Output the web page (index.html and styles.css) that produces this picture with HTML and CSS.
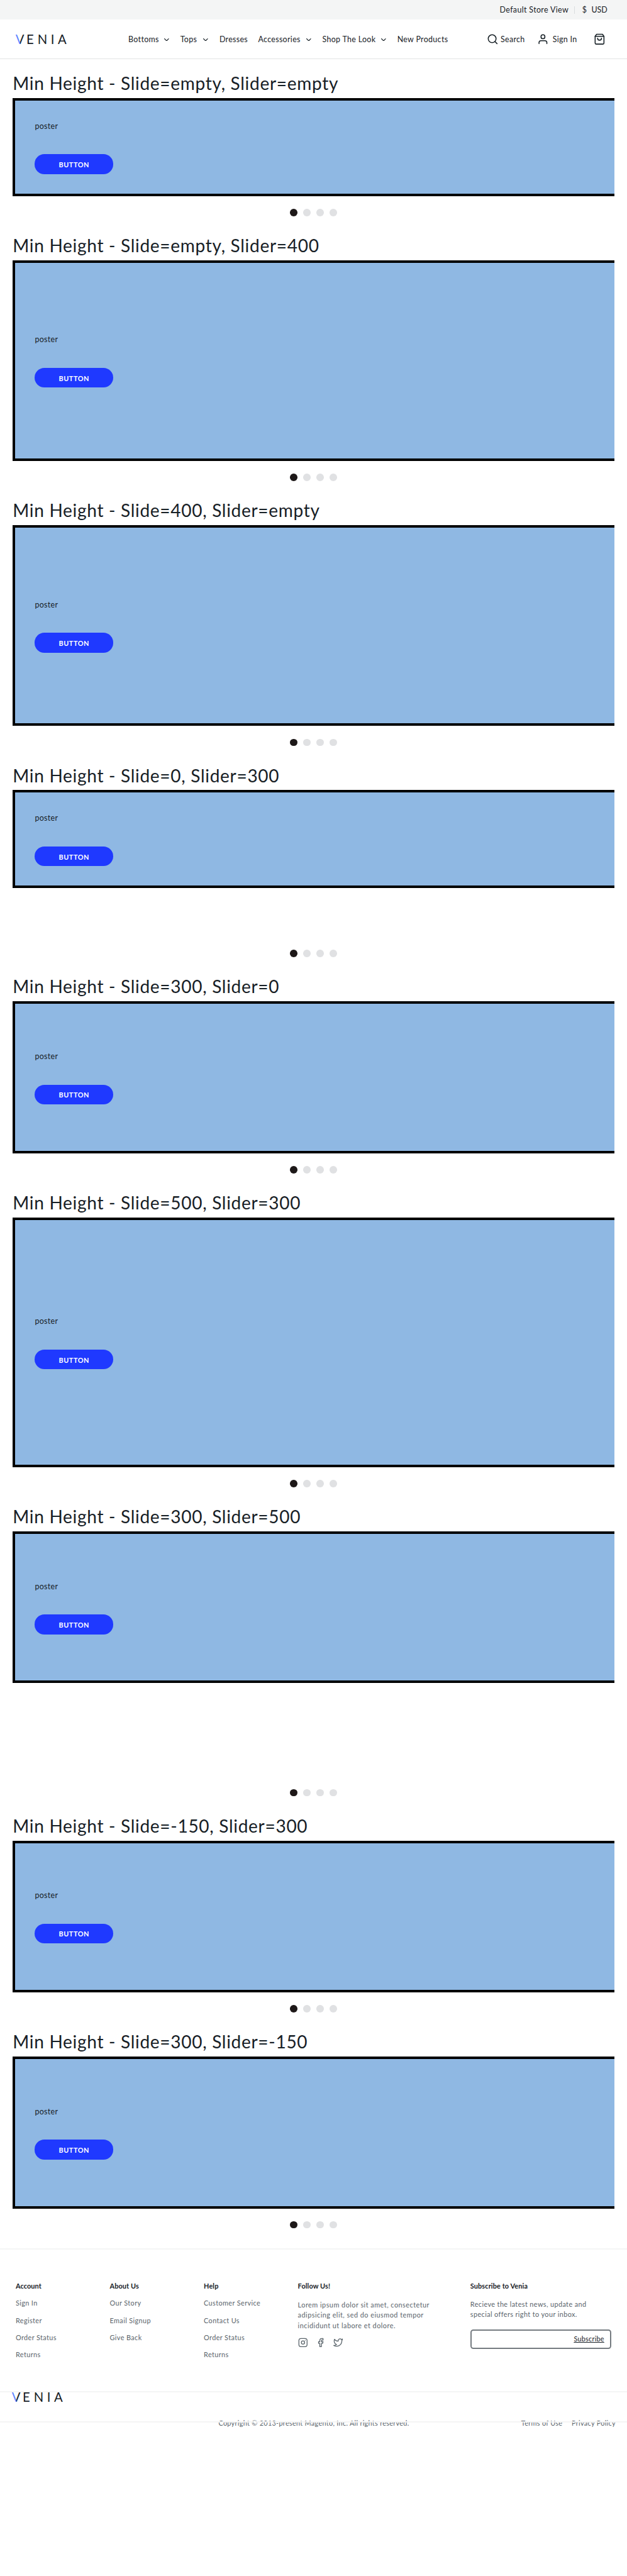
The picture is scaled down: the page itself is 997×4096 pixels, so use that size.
FILE: index.html
```html
<!DOCTYPE html>
<html lang="en">
<head>
<meta charset="utf-8">
<title>Venia</title>
<link rel="stylesheet" href="styles.css">
</head>
<body>
<svg class="defs" aria-hidden="true">
  <defs>
    <linearGradient id="vee" x1="0" x2="1" y1="0" y2="0">
      <stop offset=".5" stop-color="#5b82ff"/><stop offset=".5" stop-color="#172026"/>
    </linearGradient>
    <symbol id="logo" viewBox="0 0 103 19" overflow="visible">
      <text class="logo-text logo-v" x="-.5" y="18.8">V</text>
      <text class="logo-text" y="18.8"><tspan x="21.700">E</tspan><tspan x="44.5">N</tspan><tspan x="71.5">I</tspan><tspan x="86">A</tspan></text>
    </symbol>
    <symbol id="chev" viewBox="0 0 10 6"><path d="M.8.8 5 5 9.2.8"/></symbol>
  </defs>
</svg>
<div class="topbar">
  <span class="store">Default Store View</span><span class="rule"></span><span class="cur">$</span><span class="usd">USD</span>
</div>
<header class="header">
  <svg class="logo"><use href="#logo"/></svg>
  <nav class="nav">
    <a class="n1">Bottoms<svg class="chev"><use href="#chev"/></svg></a>
    <a class="n2">Tops<svg class="chev"><use href="#chev"/></svg></a>
    <a class="n3">Dresses</a>
    <a class="n4">Accessories<svg class="chev"><use href="#chev"/></svg></a>
    <a class="n5">Shop The Look<svg class="chev"><use href="#chev"/></svg></a>
    <a class="n6">New Products</a>
  </nav>
  <div class="actions">
    <svg class="icon" viewBox="0 0 24 24"><circle cx="11" cy="11" r="8"/><path d="m21 21-4.35-4.35"/></svg>
    <span class="search">Search</span>
    <svg class="icon user" viewBox="0 0 24 24"><path d="M20 21v-2a4 4 0 0 0-4-4H8a4 4 0 0 0-4 4v2"/><circle cx="12" cy="7" r="4"/></svg>
    <span class="sign">Sign In</span>
    <svg class="icon" viewBox="0 0 24 24"><path d="M6 2 3 6v14a2 2 0 0 0 2 2h14a2 2 0 0 0 2-2V6l-3-4z"/><path d="M3 6h18M16 10a4 4 0 0 1-8 0"/></svg>
  </div>
</header>
<main class="main">
  <h2>Min Height - Slide=empty, Slider=empty</h2>
  <div class="slider"><div class="slide"><p>poster</p><button>BUTTON</button></div></div>
  <div class="dots"><i class="on"></i><i></i><i></i><i></i></div>

  <h2>Min Height - Slide=empty, Slider=400</h2>
  <div class="slider"><div class="slide h400"><p>poster</p><button>BUTTON</button></div></div>
  <div class="dots"><i class="on"></i><i></i><i></i><i></i></div>

  <h2>Min Height - Slide=400, Slider=empty</h2>
  <div class="slider"><div class="slide h400"><p>poster</p><button>BUTTON</button></div></div>
  <div class="dots"><i class="on"></i><i></i><i></i><i></i></div>

  <h2>Min Height - Slide=0, Slider=300</h2>
  <div class="slider min300"><div class="slide"><p>poster</p><button>BUTTON</button></div></div>
  <div class="dots"><i class="on"></i><i></i><i></i><i></i></div>

  <h2>Min Height - Slide=300, Slider=0</h2>
  <div class="slider"><div class="slide h300"><p>poster</p><button>BUTTON</button></div></div>
  <div class="dots"><i class="on"></i><i></i><i></i><i></i></div>

  <h2>Min Height - Slide=500, Slider=300</h2>
  <div class="slider"><div class="slide h500"><p>poster</p><button>BUTTON</button></div></div>
  <div class="dots"><i class="on"></i><i></i><i></i><i></i></div>

  <h2>Min Height - Slide=300, Slider=500</h2>
  <div class="slider min500"><div class="slide h300"><p>poster</p><button>BUTTON</button></div></div>
  <div class="dots"><i class="on"></i><i></i><i></i><i></i></div>

  <h2>Min Height - Slide=-150, Slider=300</h2>
  <div class="slider"><div class="slide h300"><p>poster</p><button>BUTTON</button></div></div>
  <div class="dots"><i class="on"></i><i></i><i></i><i></i></div>

  <h2>Min Height - Slide=300, Slider=-150</h2>
  <div class="slider"><div class="slide h300"><p>poster</p><button>BUTTON</button></div></div>
  <div class="dots last"><i class="on"></i><i></i><i></i><i></i></div>
</main>
<footer class="footer">
  <div class="links">
    <ul><li><b>Account</b></li><li>Sign In</li><li>Register</li><li>Order Status</li><li>Returns</li></ul>
    <ul><li><b>About Us</b></li><li>Our Story</li><li>Email Signup</li><li>Give Back</li></ul>
    <ul><li><b>Help</b></li><li>Customer Service</li><li>Contact Us</li><li>Order Status</li><li>Returns</li></ul>
    <div class="follow">
      <b>Follow Us!</b>
      <p>Lorem ipsum dolor sit amet, consectetur<br>adipsicing elit, sed do eiusmod tempor<br>incididunt ut labore et dolore.</p>
      <div class="social">
        <svg viewBox="0 0 24 24"><rect x="2" y="2" width="20" height="20" rx="5"/><circle cx="12" cy="12" r="4"/><path d="M17.5 6.5h.01"/></svg>
        <svg viewBox="0 0 24 24"><path d="M18 2h-3a5 5 0 0 0-5 5v3H7v4h3v8h4v-8h3l1-4h-4V7a1 1 0 0 1 1-1h3z"/></svg>
        <svg viewBox="0 0 24 24"><path d="M23 3a10.900 10.900 0 0 1-3.140 1.530 4.480 4.480 0 0 0-7.860 3v1A10.660 10.660 0 0 1 3 4s-4 9 5 13a11.640 11.640 0 0 1-7 2c9 5 20 0 20-11.500a4.500 4.500 0 0 0-.08-.83A7.720 7.720 0 0 0 23 3z"/></svg>
      </div>
    </div>
    <div class="subscribe">
      <b>Subscribe to Venia</b>
      <p>Recieve the latest news, update and<br>special offers right to your inbox.</p>
      <div class="field"><span>Subscribe</span></div>
    </div>
  </div>
  <div class="brand"><svg class="logo"><use href="#logo"/></svg></div>
  <div class="legal">
    <span class="copy">Copyright © 2013-present Magento, Inc. All rights reserved.</span>
    <span class="terms">Terms of Use</span>
    <span class="privacy">Privacy Policy</span>
  </div>
</footer>
</body>
</html>
```
FILE: styles.css
```css
/* 1rem = 10 design units */
* { box-sizing: border-box; margin: 0; padding: 0; }
html { background: #fff; font-size: 7.79px; }
body {
  height: 4096px;
  font: 400 1.6rem/2.4rem Lato, "Open Sans", sans-serif;
  color: #172026;
}
.defs { position: absolute; width: 0; height: 0; }
svg { fill: none; stroke: #172026; stroke-width: 2; stroke-linecap: round; stroke-linejoin: round; flex: none; display: block; }
span, a { white-space: nowrap; }

.topbar { height: 4rem; background: #f4f5f5; display: flex; align-items: center; padding: .1rem 0 0 102rem; }
.store { width: 15.2rem; letter-spacing: .045rem; }
.rule { width: 1px; height: 1.6rem; background: #d9dcde; margin-right: 1.5rem; }
.cur { width: 1.9rem; }

.header { height: 8.1rem; border-bottom: 1px solid #e2e4e5; display: flex; align-items: center; padding-left: 3.2rem; }
.logo { width: 10.3rem; height: 1.9rem; overflow: visible; }
.logo-text { font: 400 26px Lato, sans-serif; fill: #172026; stroke: none; }
.logo-v { fill: url(#vee); }
.nav { display: flex; gap: 2.3rem; width: 73.2rem; margin-left: 12.7rem; padding-top: .2rem; letter-spacing: .04rem; }
.nav a { display: flex; align-items: center; justify-content: space-between; }
.chev { width: 1rem; height: .6rem; stroke-width: 1.6; }
.n1 { width: 8.3rem; } .n2 { width: 5.7rem; } .n3 { width: 5.6rem; } .n4 { width: 10.8rem; } .n5 { width: 13rem; }
.actions { display: flex; align-items: center; }
.icon { width: 2.4rem; height: 2.4rem; }
.search { width: 7.4rem; margin-left: .4rem; padding-top: .2rem; letter-spacing: .04rem; }
.sign { width: 8.4rem; margin-left: .8rem; padding-top: .2rem; letter-spacing: .04rem; }

.main { padding: 1.9rem 2.6rem 0; }
h2 { height: 6rem; font-size: 3.6rem; font-weight: 400; line-height: 6.1rem; letter-spacing: .09rem; white-space: nowrap; }
.min300 { min-height: 30rem; }
.min500 { min-height: 50rem; }
.slide { min-height: 20rem; border: 4px solid #000; border-right: 0; background: #8fb8e3; padding: 0 4rem; display: flex; flex-direction: column; justify-content: center; align-items: flex-start; }
.h300 { min-height: 31rem; }
.h400 { min-height: 41rem; }
.h500 { min-height: 51rem; }
.slide p { line-height: 2.6rem; margin-bottom: 4.4rem; letter-spacing: .04rem; }
.slide button { width: 16rem; height: 4rem; border: 0; border-radius: 2rem; background: #1f39ff; color: #fff; font: 700 1.4rem/2rem Lato, sans-serif; letter-spacing: .07rem; padding-top: .2rem; }
.dots { height: 7.1rem; padding-top: 2.6rem; display: flex; justify-content: center; gap: 1.2rem; }
.dots i { width: 1.5rem; height: 1.5rem; border-radius: 50%; background: #e0e1e3; }
.dots .on { background: #1d1818; }
.last { height: 8.2rem; }

.footer { font-size: 1.4rem; line-height: 2.1rem; color: #5a646b; letter-spacing: .05rem; }
.footer b { display: block; font-weight: 700; color: #172026; letter-spacing: .015rem; }
.links { height: 29.1rem; border-top: 2px solid #f4f5f5; padding: 6.4rem 3.2rem 0; display: grid; grid-template-columns: 19.2rem 19.2rem 19.2rem 35.2rem 28.8rem; }
ul { list-style: none; }
li { height: 3.5rem; }
.follow p { margin-top: 1.7rem; letter-spacing: .06rem; white-space: nowrap; }
.subscribe p { margin-top: 1.6rem; white-space: nowrap; }
.social { display: flex; gap: 1.6rem; margin-top: 1.4rem; }
.social svg { width: 2rem; height: 2rem; stroke: #5a646b; }
.field { height: 4rem; margin-top: 1.9rem; border: 2px solid #757b80; border-radius: .6rem; display: flex; align-items: center; justify-content: flex-end; padding-right: 1.2rem; }
.field span { color: #172026; letter-spacing: .03rem; text-decoration: underline; text-decoration-thickness: .15rem; }
.brand { height: 5.3rem; border-top: 2px solid #f4f5f5; padding-left: 2.4rem; }
.legal { position: relative; display: flex; padding: .2rem 0 0 44.6rem; letter-spacing: .038rem; }
.legal::after { content: ""; position: absolute; inset: .9rem 0 auto 0; height: 2px; background: #f4f5f5; }
.copy { width: 61.8rem; }
.terms { width: 10.3rem; }
```
